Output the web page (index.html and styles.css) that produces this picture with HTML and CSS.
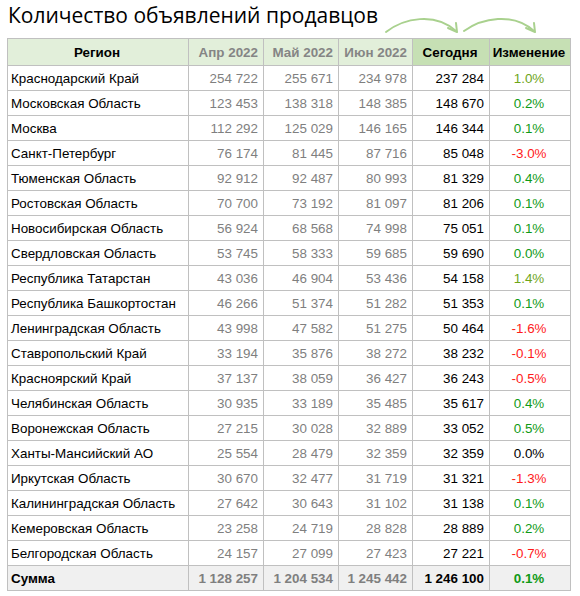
FILE: index.html
```html
<!DOCTYPE html>
<html lang="ru">
<head>
<meta charset="utf-8">
<link rel="stylesheet" href="styles.css">
</head>
<body>
<div class="page">
  <div class="title-bar">
    <h1 class="title">Количество объявлений продавцов</h1>
    <svg class="arrows" width="160" height="24" viewBox="0 0 160 24" fill="none" stroke="#a9d18e" stroke-width="2" stroke-linecap="round" stroke-linejoin="round">
      <path d="M3 19 C 21 5, 52 -1, 73 18"/>
      <path d="M65 15 L74 19 L73 10"/>
      <path d="M81 18 C 99 5, 130 -1, 151 18"/>
      <path d="M143 15 L152 19 L151 10"/>
    </svg>
  </div>
  <div class="grid">
    <div class="row head">
      <div class="cell h-region">Регион</div>
      <div class="cell h-month">Апр 2022</div>
      <div class="cell h-month">Май 2022</div>
      <div class="cell h-month">Июн 2022</div>
      <div class="cell h-dark">Сегодня</div>
      <div class="cell h-dark">Изменение</div>
    </div>
    <div class="row"><div class="cell">Краснодарский Край</div><div class="cell m">254 722</div><div class="cell m">255 671</div><div class="cell m">234 978</div><div class="cell t">237 284</div><div class="cell ch hi">1.0%</div></div>
    <div class="row"><div class="cell">Московская Область</div><div class="cell m">123 453</div><div class="cell m">138 318</div><div class="cell m">148 385</div><div class="cell t">148 670</div><div class="cell ch up">0.2%</div></div>
    <div class="row"><div class="cell">Москва</div><div class="cell m">112 292</div><div class="cell m">125 029</div><div class="cell m">146 165</div><div class="cell t">146 344</div><div class="cell ch up">0.1%</div></div>
    <div class="row"><div class="cell">Санкт-Петербург</div><div class="cell m">76 174</div><div class="cell m">81 445</div><div class="cell m">87 716</div><div class="cell t">85 048</div><div class="cell ch down">-3.0%</div></div>
    <div class="row"><div class="cell">Тюменская Область</div><div class="cell m">92 912</div><div class="cell m">92 487</div><div class="cell m">80 993</div><div class="cell t">81 329</div><div class="cell ch up">0.4%</div></div>
    <div class="row"><div class="cell">Ростовская Область</div><div class="cell m">70 700</div><div class="cell m">73 192</div><div class="cell m">81 097</div><div class="cell t">81 206</div><div class="cell ch up">0.1%</div></div>
    <div class="row"><div class="cell">Новосибирская Область</div><div class="cell m">56 924</div><div class="cell m">68 568</div><div class="cell m">74 998</div><div class="cell t">75 051</div><div class="cell ch up">0.1%</div></div>
    <div class="row"><div class="cell">Свердловская Область</div><div class="cell m">53 745</div><div class="cell m">58 333</div><div class="cell m">59 685</div><div class="cell t">59 690</div><div class="cell ch up">0.0%</div></div>
    <div class="row"><div class="cell">Республика Татарстан</div><div class="cell m">43 036</div><div class="cell m">46 904</div><div class="cell m">53 436</div><div class="cell t">54 158</div><div class="cell ch hi">1.4%</div></div>
    <div class="row"><div class="cell">Республика Башкортостан</div><div class="cell m">46 266</div><div class="cell m">51 374</div><div class="cell m">51 282</div><div class="cell t">51 353</div><div class="cell ch up">0.1%</div></div>
    <div class="row"><div class="cell">Ленинградская Область</div><div class="cell m">43 998</div><div class="cell m">47 582</div><div class="cell m">51 275</div><div class="cell t">50 464</div><div class="cell ch down">-1.6%</div></div>
    <div class="row"><div class="cell">Ставропольский Край</div><div class="cell m">33 194</div><div class="cell m">35 876</div><div class="cell m">38 272</div><div class="cell t">38 232</div><div class="cell ch down">-0.1%</div></div>
    <div class="row"><div class="cell">Красноярский Край</div><div class="cell m">37 137</div><div class="cell m">38 059</div><div class="cell m">36 427</div><div class="cell t">36 243</div><div class="cell ch down">-0.5%</div></div>
    <div class="row"><div class="cell">Челябинская Область</div><div class="cell m">30 935</div><div class="cell m">33 189</div><div class="cell m">35 485</div><div class="cell t">35 617</div><div class="cell ch up">0.4%</div></div>
    <div class="row"><div class="cell">Воронежская Область</div><div class="cell m">27 215</div><div class="cell m">30 028</div><div class="cell m">32 889</div><div class="cell t">33 052</div><div class="cell ch up">0.5%</div></div>
    <div class="row"><div class="cell">Ханты-Мансийский АО</div><div class="cell m">25 554</div><div class="cell m">28 479</div><div class="cell m">32 359</div><div class="cell t">32 359</div><div class="cell ch zero">0.0%</div></div>
    <div class="row"><div class="cell">Иркутская Область</div><div class="cell m">30 670</div><div class="cell m">32 477</div><div class="cell m">31 719</div><div class="cell t">31 321</div><div class="cell ch down">-1.3%</div></div>
    <div class="row"><div class="cell">Калининградская Область</div><div class="cell m">27 642</div><div class="cell m">30 643</div><div class="cell m">31 102</div><div class="cell t">31 138</div><div class="cell ch up">0.1%</div></div>
    <div class="row"><div class="cell">Кемеровская Область</div><div class="cell m">23 258</div><div class="cell m">24 719</div><div class="cell m">28 828</div><div class="cell t">28 889</div><div class="cell ch up">0.2%</div></div>
    <div class="row"><div class="cell">Белгородская Область</div><div class="cell m">24 157</div><div class="cell m">27 099</div><div class="cell m">27 423</div><div class="cell t">27 221</div><div class="cell ch down">-0.7%</div></div>
    <div class="row total"><div class="cell">Сумма</div><div class="cell m">1 128 257</div><div class="cell m">1 204 534</div><div class="cell m">1 245 442</div><div class="cell t">1 246 100</div><div class="cell ch up">0.1%</div></div>
  </div>
</div>
</body>
</html>
```
FILE: styles.css
```css
html, body {
  margin: 0;
  padding: 0;
  background: #ffffff;
}
.page {
  width: 580px;
  padding-left: 7px;
  box-sizing: border-box;
}
.title-bar {
  position: relative;
  height: 38px;
}
.title {
  margin: 0;
  padding-left: 1px;
  font-family: "Open Sans", "Noto Sans", sans-serif;
  font-weight: 400;
  font-size: 21px;
  line-height: 30px;
  color: #000;
}
.arrows {
  position: absolute;
  left: 376px;
  top: 13px;
}
.grid {
  display: grid;
  grid-template-columns: 180px 74px 74px 73px 76px 80px;
  grid-template-rows: 26px;
  grid-auto-rows: 24px;
  gap: 1px;
  padding: 1px;
  width: 564px;
  box-sizing: border-box;
  background: #c0c0c0;
  font-family: "Liberation Sans", Arial, sans-serif;
  font-size: 13.4px;
  color: #000;
}
.row {
  display: contents;
}
.cell {
  display: flex;
  align-items: center;
  justify-content: flex-start;
  padding: 0 5px 0 3px;
  background: #ffffff;
  white-space: nowrap;
  overflow: hidden;
}
.head .cell {
  font-weight: 700;
  background: #e2efda;
  justify-content: center;
}
.head .cell.h-month {
  color: #858585;
  justify-content: flex-end;
}
.head .cell.h-dark {
  background: #c6e0b4;
}
.cell.m {
  justify-content: flex-end;
  color: #7f7f7f;
}
.cell.t {
  justify-content: flex-end;
  color: #000;
}
.cell.ch {
  justify-content: center;
}
.ch.up { color: #0f9a16; }
.ch.hi { color: #6ea51a; }
.ch.down { color: #ff1a1a; }
.ch.zero { color: #000; }
.total .cell {
  background: #f0f0f0;
  font-weight: 700;
}
```
